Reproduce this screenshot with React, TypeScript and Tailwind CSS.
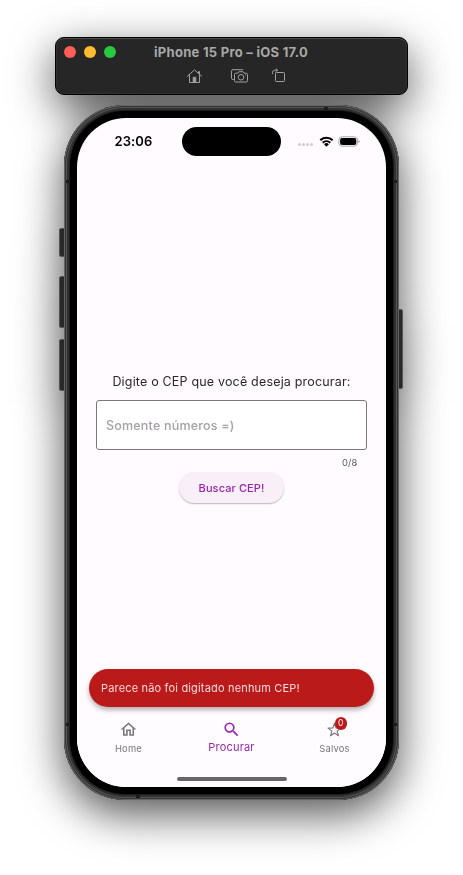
import React from "react";
import { MdOutlineHome, MdSearch } from "react-icons/md";

function TitleBar() {
  return (
    <header className="flex h-[58px] w-[353px] flex-col rounded-[9px] border border-black bg-[#262626] shadow-[inset_0_1px_0_#4c4c4c,inset_0_0_0_1px_#303030]">
      <div className="flex h-[27px] items-center pl-[8px]">
        <div className="flex w-[90px] gap-2">
          <span className="size-3 rounded-full bg-[#ff5f57]" />
          <span className="size-3 rounded-full bg-[#febc2e]" />
          <span className="size-3 rounded-full bg-[#28c840]" />
        </div>
        <h1 className="whitespace-nowrap text-[13px] font-bold leading-4 tracking-[0.28px] text-[#a8a8a8]">
          iPhone 15 Pro – iOS 17.0
        </h1>
      </div>
      <div className="flex h-[22px] items-center pl-[130px] text-[#a0a0a0]">
        <svg width="17" height="16" viewBox="0 0 17 16" fill="none" stroke="currentColor" strokeWidth="1">
          <path d="M1.3 8.3 8.5 1.9 15.7 8.3M3.5 6.8v7.7h10V6.8M12.5 5V3.5h1V6" strokeLinejoin="round" strokeLinecap="round" />
          <path d="M7.2 9.3h2.6v5.2H7.2z" fill="currentColor" />
        </svg>
        <svg className="ml-[27px]" width="19" height="16" viewBox="0 0 19 16" fill="none" stroke="currentColor" strokeWidth="1">
          <path d="M3.8 11.5H3A1.5 1.5 0 0 1 1.5 10V3.2A1.5 1.5 0 0 1 3 1.7h10.2" />
          <path d="M5.8 5.2h2.1l1-1.5h4.2l1 1.5h2.1a1.3 1.3 0 0 1 1.3 1.3v6.2a1.3 1.3 0 0 1-1.3 1.3H5.8a1.3 1.3 0 0 1-1.3-1.3V6.5a1.3 1.3 0 0 1 1.3-1.3Z" />
          <circle cx="11" cy="9.3" r="2.8" />
          <path d="M15.2 7h.8" />
        </svg>
        <svg className="ml-[22px]" width="16" height="16" viewBox="0 0 16 16" fill="none" stroke="currentColor" strokeWidth="1">
          <rect x="4.5" y="4.5" width="9" height="9" rx="0.8" />
          <path d="M1.5 6V4.5a2.3 2.3 0 0 1 2.3-2.3h2.2M4.7.5l2 1.7-2 1.6" />
        </svg>
      </div>
    </header>
  );
}

function StatusBar() {
  return (
    <div className="flex h-[46px] shrink-0 items-center text-black">
      <time className="w-[105px] pl-[37.5px] text-[13px] font-semibold leading-none tracking-[0.1px]">23:06</time>
      <div className="h-[29px] w-[99px] rounded-full bg-black" />
      <div className="ml-[17px] flex items-center gap-[5px]">
        <div className="mt-[6px] flex gap-[1px]">
          <i className="size-[3px] rounded-full bg-[#d0ccd0]" />
          <i className="size-[3px] rounded-full bg-[#d0ccd0]" />
          <i className="size-[3px] rounded-full bg-[#d0ccd0]" />
          <i className="size-[3px] rounded-full bg-[#d0ccd0]" />
        </div>
        <svg className="ml-px" width="15" height="11" viewBox="0 0 15 11" fill="none" stroke="#000" strokeWidth="2">
          <path d="M1.3 4.2a9 9 0 0 1 12.4 0M3.7 6.8a5.5 5.5 0 0 1 7.6 0" />
          <path d="M5.1 8.3a3.4 3.4 0 0 1 4.8 0L7.5 10.7Z" fill="#000" stroke="none" />
        </svg>
        <svg className="-ml-px" width="23" height="11" viewBox="0 0 23 11">
          <rect x="0.9" y="0.8" width="18.6" height="9.4" rx="3" fill="none" stroke="#aaa7aa" />
          <rect x="2.1" y="2" width="16.2" height="7" rx="1.9" />
          <path d="M20.4 4v3q1.4-.5 1.4-1.5T20.4 4Z" fill="#aaa7aa" />
        </svg>
      </div>
    </div>
  );
}

function SearchForm() {
  return (
    <main className="flex flex-1 flex-col items-center pt-[210px]">
      <label htmlFor="cep" className="whitespace-nowrap text-[12.5px] leading-4 tracking-[0.18px] text-[#2b282c]">
        Digite o CEP que você deseja procurar:
      </label>
      <input
        id="cep"
        placeholder="Somente números =)"
        className="mt-[10px] h-[50px] w-[271px] rounded-[3px] border border-[#7e757d] bg-white px-[9px] text-[12.5px] font-medium tracking-[0.2px] placeholder:text-[#a3a1a3]"
      />
      <div className="mt-[7px] flex w-[271px] justify-end pr-[9.5px] text-[9.4px] leading-3 tracking-[0.1px] text-[#5c575d]">
        0/8
      </div>
      <button className="mt-[3px] h-[31px] w-[105px] rounded-full bg-[#f8eff9] pt-px text-[11px] font-medium tracking-[0.1px] text-[#9a25ae] shadow-[0_1px_1.5px_rgba(0,0,0,0.28)]">
        Buscar CEP!
      </button>
    </main>
  );
}

function NavBar() {
  return (
    <nav className="flex h-[73px] shrink-0 bg-[#fffcff] pt-[6px] text-[#79767a]">
      <a className="flex w-[103px] flex-col items-center">
        <MdOutlineHome className="size-[19px]" />
        <span className="mt-[4px] text-[9.4px] leading-3 tracking-[0.2px]">Home</span>
      </a>
      <a className="flex w-[103px] flex-col items-center text-[#9a25ae]">
        <MdSearch className="size-[19px]" />
        <span className="mt-[2px] text-[11px] leading-3 tracking-[0.2px]">Procurar</span>
      </a>
      <a className="flex w-[103px] flex-col items-center">
        <span className="relative size-[19px]">
          <svg width="19" height="19" viewBox="0 0 19 19" fill="none" stroke="currentColor" strokeWidth="1.1">
            <path d="m9.5 3.3 1.6 4.7 4.9.1-3.9 3 1.4 4.7-4-2.8-4 2.8 1.4-4.7-3.9-3 4.9-.1Z" strokeLinejoin="round" />
          </svg>
          <b className="absolute left-[9.5px] top-[-3px] flex size-[12.5px] items-center justify-center rounded-full bg-[#ba1a1a] text-[8.5px] font-normal leading-none text-white">
            0
          </b>
        </span>
        <span className="mt-[4px] text-[9.4px] leading-3 tracking-[0.2px]">Salvos</span>
      </a>
    </nav>
  );
}

function Phone() {
  return (
    <section className="relative mt-[10px] h-[695px] w-[335px]">
      <i className="absolute left-[-5px] top-[123px] h-[29px] w-[8px] rounded-[2px] border border-[#555] bg-[#292929]" />
      <i className="absolute left-[-5px] top-[171px] h-[52px] w-[8px] rounded-[2px] border border-[#555] bg-[#292929]" />
      <i className="absolute left-[-5px] top-[234px] h-[52px] w-[8px] rounded-[2px] border border-[#555] bg-[#292929]" />
      <i className="absolute right-[-4px] top-[204px] h-[80px] w-[8px] rounded-[2px] border border-[#555] bg-[#292929]" />
      <div className="relative h-full w-full rounded-[61px] bg-black p-[13px] shadow-[inset_0_0_0_1px_#666,inset_0_0_0_2px_#333,inset_0_0_0_3px_#555,inset_0_0_0_5px_#303030,inset_0_0_0_6px_#1c1c1c]">
        <div className="relative flex h-full w-full flex-col overflow-hidden rounded-[49px] bg-[#fffbff]">
          <StatusBar />
          <SearchForm />
          <NavBar />
          <div className="absolute left-[12px] top-[551px] flex h-[38px] w-[285px] items-center rounded-full bg-[#ba1a1a] pl-[12px] text-[11px] tracking-[0.17px] text-[#f7dadd] shadow-[0_3px_5px_rgba(0,0,0,0.3)]">
            Parece não foi digitado nenhum CEP!
          </div>
          <div className="absolute bottom-[6px] left-[100px] h-[4px] w-[110px] rounded-full bg-[#686668]" />
        </div>
        <i className="absolute left-[2px] top-[75px] h-[3px] w-[4px] bg-[#1c1c1c]" />
        <i className="absolute right-[2px] top-[75px] h-[3px] w-[4px] bg-[#1c1c1c]" />
        <i className="absolute left-[2px] top-[618px] h-[3px] w-[4px] bg-[#1c1c1c]" />
        <i className="absolute right-[2px] top-[618px] h-[3px] w-[4px] bg-[#1c1c1c]" />
        <i className="absolute left-[260px] top-[2px] h-[4px] w-[4px] bg-[#1c1c1c]" />
        <i className="absolute bottom-[2px] left-[72px] h-[4px] w-[4px] bg-[#1c1c1c]" />
      </div>
    </section>
  );
}

export default function App() {
  return (
    <div className="h-[875px] w-[463px] overflow-hidden bg-white pt-[37px] font-['Inter','Liberation_Sans',sans-serif]">
      <div className="flex flex-col items-center drop-shadow-[0_14px_22px_rgba(0,0,0,0.68)]">
        <TitleBar />
        <Phone />
      </div>
    </div>
  );
}
